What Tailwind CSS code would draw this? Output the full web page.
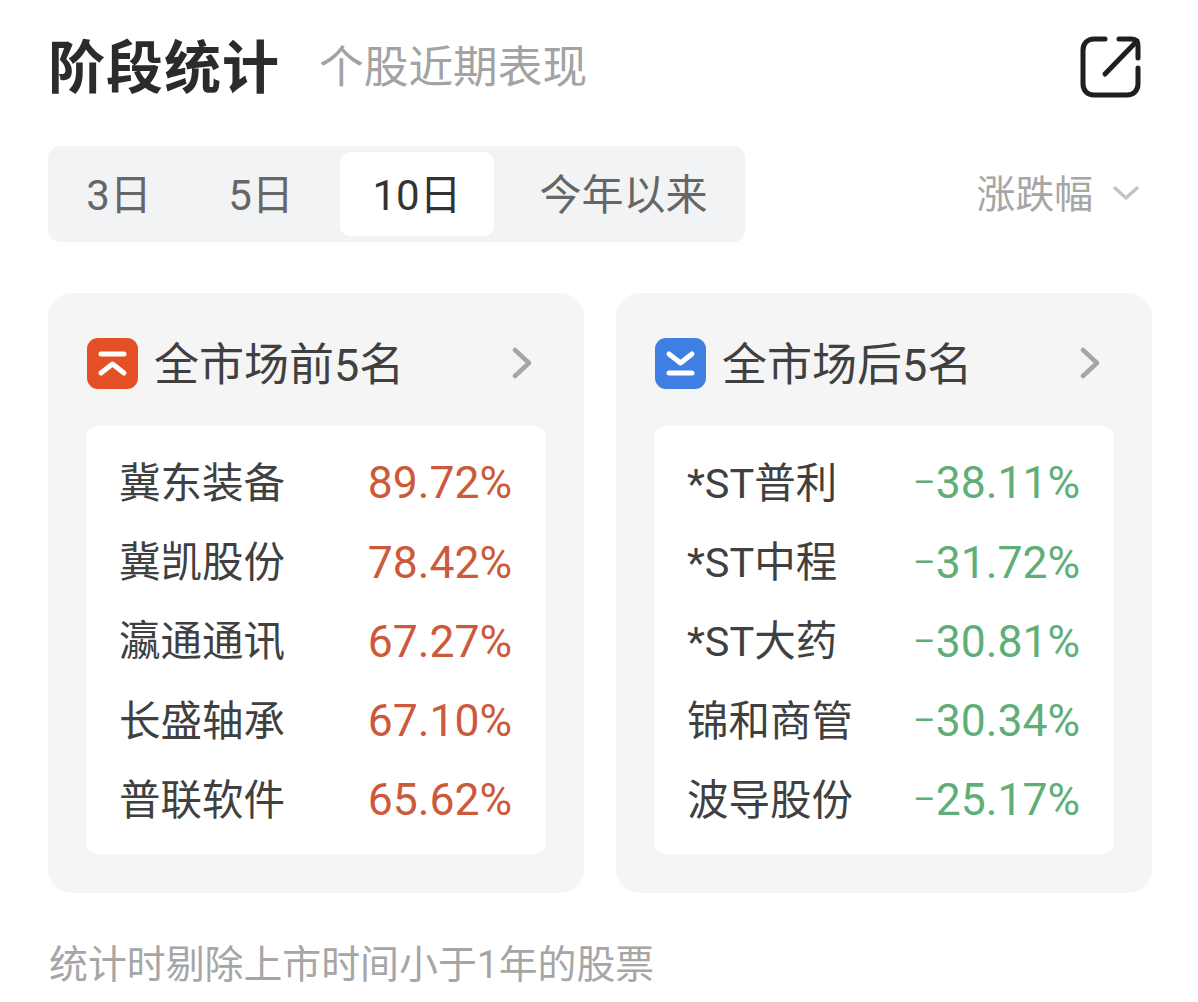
<!DOCTYPE html>
<html lang="zh">
<head>
  <meta charset="UTF-8" />
  <title>阶段统计</title>
  <script src="https://cdn.jsdelivr.net/npm/@tailwindcss/browser@4"></script>
</head>
<body class="bg-white font-['Roboto','Noto_Sans_CJK_SC',sans-serif] w-[1198px] h-[1002px] overflow-hidden">
  <div class="pl-[48px] pr-[46px]">

    <!-- header -->
    <div class="flex items-center h-[134px] pt-[2px]">
      <h1 class="text-[57px] font-bold text-[#2b2b2b] leading-none tracking-[1px] w-[232px] whitespace-nowrap">阶段统计</h1>
      <span class="ml-[39px] text-[44.700px] leading-none text-[#a3a3a3] whitespace-nowrap">个股近期表现</span>
      <svg class="ml-auto mr-[10px] -mt-[4px]" width="64" height="64" viewBox="0 0 64 64" fill="none" stroke="#1f1f1f" stroke-width="5" stroke-linecap="round" stroke-linejoin="round">
        <path d="M27 5H16C9.5 5 5 9.5 5 16V50C5 56.5 9.5 61 16 61H49C55.5 61 60 56.5 60 50V34"/>
        <path d="M27 40L59 7"/>
        <path d="M41 5H53C57.500 5 60 7.500 60 12V24"/>
      </svg>
    </div>

    <!-- period tabs -->
    <div class="flex items-center justify-between mt-[12px]">
      <div class="flex items-center w-[697px] h-[96px] bg-[#f2f3f5] rounded-[12px] p-[6px] text-[42px] text-[#666666]">
        <div class="w-[130px] text-center pt-[3px]">3日</div>
        <div class="w-[156px] text-center pt-[3px] pr-[2px]">5日</div>
        <div class="w-[154px] h-[84px] bg-white rounded-[10px] flex items-center justify-center pt-[3px] text-[#333333]">10日</div>
        <div class="flex-1 text-center pt-[3px] pl-[14px]">今年以来</div>
      </div>
      <div class="flex items-center mr-[13px] text-[38.800px] text-[#a6a6a6]">
        <span class="pt-[3px]">涨跌幅</span>
        <svg class="ml-[20px] -mt-[3px]" width="26" height="16" viewBox="0 0 26 16" fill="none" stroke="#c4c4c4" stroke-width="3.500" stroke-linecap="round" stroke-linejoin="round"><path d="M2 3L13 13L24 3"/></svg>
      </div>
    </div>

    <!-- ranking cards -->
    <div class="flex justify-between mt-[51px] w-[1104px]">

      <div class="w-[536px] h-[600px] bg-[#f5f5f6] rounded-[24px] pl-[39px] pr-[52px] pt-[45px]">
        <div class="flex items-center h-[50px]">
          <svg width="51" height="51" viewBox="0 0 51 51"><rect width="51" height="51" rx="11" fill="#e54f26"/><g fill="none" stroke="#fff" stroke-width="5" stroke-linecap="round" stroke-linejoin="round"><path d="M14 16H37"/><path d="M14 35L25.500 26L37 35"/></g></svg>
          <span class="ml-[16px] text-[45px] text-[#404040] leading-none pt-[4px]">全市场前5名</span>
          <svg class="ml-auto" width="20" height="32" viewBox="0 0 20 32" fill="none" stroke="#a6a6a6" stroke-width="4.500" stroke-linecap="round" stroke-linejoin="round"><path d="M3 3L17 16L3 29"/></svg>
        </div>
        <div class="-ml-[1px] -mr-[14px] mt-[38px] h-[428px] bg-white rounded-[12px] pl-[33px] pr-[34px] pt-[18px] text-[41.500px] leading-none">
          <div class="flex justify-between items-center h-[79.250px]"><span class="text-[#404040]">冀东装备</span><span class="text-[#cc5a3a] text-[44.500px]">89.72%</span></div>
          <div class="flex justify-between items-center h-[79.250px]"><span class="text-[#404040]">冀凯股份</span><span class="text-[#cc5a3a] text-[44.500px]">78.42%</span></div>
          <div class="flex justify-between items-center h-[79.250px]"><span class="text-[#404040]">瀛通通讯</span><span class="text-[#cc5a3a] text-[44.500px]">67.27%</span></div>
          <div class="flex justify-between items-center h-[79.250px]"><span class="text-[#404040]">长盛轴承</span><span class="text-[#cc5a3a] text-[44.500px]">67.10%</span></div>
          <div class="flex justify-between items-center h-[79.250px]"><span class="text-[#404040]">普联软件</span><span class="text-[#cc5a3a] text-[44.500px]">65.62%</span></div>
        </div>
      </div>

      <div class="w-[536px] h-[600px] bg-[#f5f5f6] rounded-[24px] pl-[39px] pr-[52px] pt-[45px]">
        <div class="flex items-center h-[50px]">
          <svg width="51" height="51" viewBox="0 0 51 51"><rect width="51" height="51" rx="11" fill="#3f7fe3"/><g fill="none" stroke="#fff" stroke-width="5" stroke-linecap="round" stroke-linejoin="round"><path d="M14 35H37"/><path d="M14 16L25.500 25L37 16"/></g></svg>
          <span class="ml-[16px] text-[45px] text-[#404040] leading-none pt-[4px]">全市场后5名</span>
          <svg class="ml-auto" width="20" height="32" viewBox="0 0 20 32" fill="none" stroke="#a6a6a6" stroke-width="4.500" stroke-linecap="round" stroke-linejoin="round"><path d="M3 3L17 16L3 29"/></svg>
        </div>
        <div class="-ml-[1px] -mr-[14px] mt-[38px] h-[428px] bg-white rounded-[12px] pl-[33px] pr-[34px] pt-[18px] text-[41.500px] leading-none">
          <div class="flex justify-between items-center h-[79.250px]"><span class="text-[#404040]">*ST普利</span><span class="text-[#5fae78] text-[44.500px]"><span class="relative -top-[4px] text-[34px] leading-none">–</span>38.11%</span></div>
          <div class="flex justify-between items-center h-[79.250px]"><span class="text-[#404040]">*ST中程</span><span class="text-[#5fae78] text-[44.500px]"><span class="relative -top-[4px] text-[34px] leading-none">–</span>31.72%</span></div>
          <div class="flex justify-between items-center h-[79.250px]"><span class="text-[#404040]">*ST大药</span><span class="text-[#5fae78] text-[44.500px]"><span class="relative -top-[4px] text-[34px] leading-none">–</span>30.81%</span></div>
          <div class="flex justify-between items-center h-[79.250px]"><span class="text-[#404040]">锦和商管</span><span class="text-[#5fae78] text-[44.500px]"><span class="relative -top-[4px] text-[34px] leading-none">–</span>30.34%</span></div>
          <div class="flex justify-between items-center h-[79.250px]"><span class="text-[#404040]">波导股份</span><span class="text-[#5fae78] text-[44.500px]"><span class="relative -top-[4px] text-[34px] leading-none">–</span>25.17%</span></div>
        </div>
      </div>
    </div>

    <p class="mt-[53px] ml-[1px] text-[38.900px] leading-none text-[#a6a6a6] whitespace-nowrap">统计时剔除上市时间小于1年的股票</p>
  </div>
</body>
</html>
